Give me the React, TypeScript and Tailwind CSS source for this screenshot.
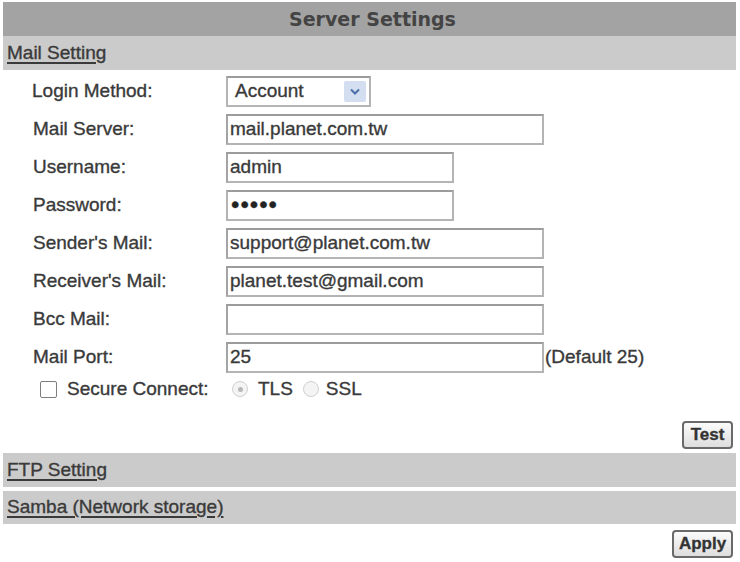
import React from "react";

const FONT = { fontFamily: '"Liberation Sans", Arial, sans-serif' };

function Field({ label, width, value, suffix }: { label: string; width: string; value?: string; suffix?: string }) {
  return (
    <div className="flex h-[38px] items-center">
      <div className="w-[223px] pl-[30px]">{label}</div>
      <div
        className={`flex h-[31px] items-center border-2 border-[#b4b4b4] border-t-[#9c9c9c] border-l-[#a4a4a4] bg-white pl-[2px] ${width}`}
      >
        {value}
      </div>
      {suffix && <span className="ml-[1px]">{suffix}</span>}
    </div>
  );
}

function Radio({ checked }: { checked?: boolean }) {
  return (
    <span className="flex h-[16px] w-[16px] items-center justify-center rounded-full border border-[#d0d0d0] bg-[#f4f4f4]">
      {checked && <span className="h-[5px] w-[5px] rounded-full bg-[#b8b8b8]" />}
    </span>
  );
}

function Bar({ children, h }: { children: React.ReactNode; h: string }) {
  return (
    <div className={`flex items-center bg-[#cbcbcb] pl-[4px] ${h}`}>
      <span className="underline decoration-[1.5px] underline-offset-[3px]">{children}</span>
    </div>
  );
}

function Btn({ children, w }: { children: React.ReactNode; w: string }) {
  return (
    <button
      className={`flex h-[28px] items-center justify-center rounded-[4px] border-2 border-[#6a6a6a] bg-gradient-to-b from-[#fbfbfb] to-[#dedede] text-[17px] font-bold text-[#333] ${w}`}
    >
      {children}
    </button>
  );
}

export default function App() {
  return (
    <div
      className="h-[562px] w-[740px] bg-white text-[19px] text-[#3a3a3a] [-webkit-text-stroke:0.35px_#3a3a3a]"
      style={FONT}
    >
      <div className="ml-[3px] w-[733px] pt-[2px]">
        <div
          className="flex h-[34px] items-center justify-center pl-[6px] bg-[#a3a3a3] text-[19px] font-bold text-[#444] [-webkit-text-stroke:0px]"
          style={{ fontFamily: '"DejaVu Sans", Verdana, sans-serif' }}
        >
          Server Settings
        </div>
        <Bar h="h-[34px]">Mail Setting</Bar>

        <div className="pt-[2px]">
          <div className="flex h-[38px] items-center">
            <div className="w-[223px] pl-[29px]">Login Method:</div>
            <div className="flex h-[31px] w-[145px] items-center justify-between border-2 border-[#b4b4b4] border-t-[#9c9c9c] bg-white pl-[7px] pr-[3px]">
              <span>Account</span>
              <span className="flex h-[21px] w-[22px] items-center justify-center rounded-[2px] bg-[#d3def1]">
                <svg width="10" height="7" viewBox="0 0 10 7">
                  <path d="M1 1.5 L5 5.5 L9 1.5" fill="none" stroke="#4d6fa8" strokeWidth="2" />
                </svg>
              </span>
            </div>
          </div>
          <Field label="Mail Server:" width="w-[318px]" value="mail.planet.com.tw" />
          <Field label="Username:" width="w-[228px]" value="admin" />
          <div className="flex h-[38px] items-center">
            <div className="w-[223px] pl-[30px]">Password:</div>
            <div className="flex h-[31px] w-[228px] items-center border-2 border-[#b4b4b4] border-t-[#9c9c9c] bg-white pl-[3px]">
              <span className="text-[24px] leading-none tracking-[1px] text-[#222]">•••••</span>
            </div>
          </div>
          <Field label="Sender's Mail:" width="w-[318px]" value="support@planet.com.tw" />
          <Field label="Receiver's Mail:" width="w-[318px]" value="planet.test@gmail.com" />
          <Field label="Bcc Mail:" width="w-[318px]" />
          <Field label="Mail Port:" width="w-[318px]" value="25" suffix="(Default 25)" />

          <div className="flex h-[26px] items-center">
            <span className="ml-[37px] h-[17px] w-[17px] rounded-[2px] border border-[#7d7d7d] bg-white" />
            <span className="ml-[10px] w-[165px]">Secure Connect:</span>
            <Radio checked />
            <span className="ml-[10px]">TLS</span>
            <span className="ml-[10px]">
              <Radio />
            </span>
            <span className="ml-[7px]">SSL</span>
          </div>
        </div>

        <div className="mt-[19px] flex justify-end pr-[3px]">
          <Btn w="w-[51px]">Test</Btn>
        </div>
        <div className="mt-[4px]">
          <Bar h="h-[34px]">FTP Setting</Bar>
        </div>
        <div className="mt-[4px]">
          <Bar h="h-[33px]">Samba (Network storage)</Bar>
        </div>
        <div className="mt-[6px] flex justify-end pr-[3px]">
          <Btn w="w-[61px]">Apply</Btn>
        </div>
      </div>
    </div>
  );
}
